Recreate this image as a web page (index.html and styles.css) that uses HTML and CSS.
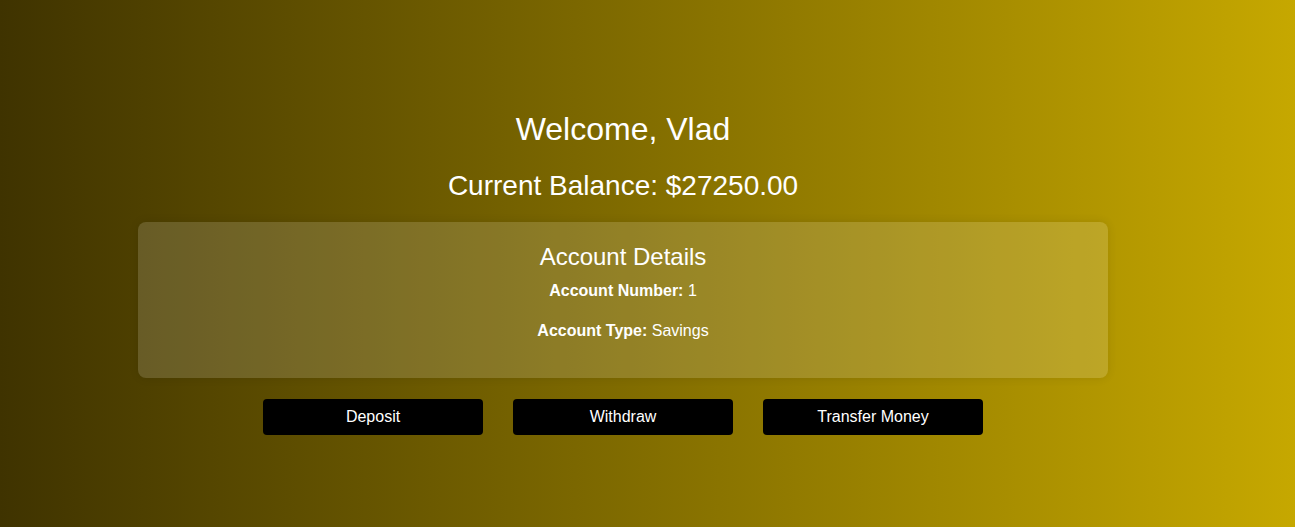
FILE: index.html
```html
<!DOCTYPE html>
<html lang="en">
<head>
<meta charset="utf-8">
<title>Dashboard</title>
<link rel="stylesheet" href="styles.css">
</head>
<body>
<main class="page">
  <h1 class="welcome">Welcome, Vlad</h1>
  <h2 class="balance">Current Balance: $27250.00</h2>
  <section class="card">
    <h3 class="card-title">Account Details</h3>
    <p class="detail"><strong>Account Number:</strong> 1</p>
    <p class="detail"><strong>Account Type:</strong> Savings</p>
  </section>
  <div class="actions">
    <button class="btn">Deposit</button>
    <button class="btn">Withdraw</button>
    <button class="btn">Transfer Money</button>
  </div>
</main>
</body>
</html>
```
FILE: styles.css
```css
html, body {
  margin: 0;
  padding: 0;
  height: 100%;
}
body {
  font-family: "Liberation Sans", Arial, sans-serif;
  color: #ffffff;
  background: linear-gradient(to right, #3f3300 0%, #c6a800 100%);
  overflow: hidden;
}
.page {
  width: 1246px;
  display: flex;
  flex-direction: column;
  align-items: center;
  padding-top: 111px;
  box-sizing: border-box;
}
.welcome {
  margin: 0;
  font-size: 32px;
  font-weight: normal;
  line-height: 37px;
}
.balance {
  margin: 22px 0 0;
  font-size: 28px;
  font-weight: normal;
  line-height: 32px;
}
.card {
  margin-top: 20px;
  width: 970px;
  box-sizing: border-box;
  padding: 21px 20px 0;
  height: 156px;
  background: rgba(255, 255, 255, 0.15);
  border-radius: 8px;
  box-shadow: 0 0 10px rgba(0, 0, 0, 0.1);
  display: flex;
  flex-direction: column;
  align-items: center;
}
.card-title {
  margin: 0;
  font-size: 24px;
  font-weight: normal;
  line-height: 28px;
}
.detail {
  margin: 11px 0 0;
  font-size: 16px;
  line-height: 18px;
}
.detail + .detail {
  margin-top: 22px;
}
.actions {
  margin-top: 21px;
  display: flex;
  gap: 30px;
}
.btn {
  width: 220px;
  height: 36px;
  background: #000000;
  color: #ffffff;
  border: none;
  border-radius: 4px;
  font-family: "Liberation Sans", Arial, sans-serif;
  font-size: 16px;
  padding: 0;
  cursor: pointer;
}
```
